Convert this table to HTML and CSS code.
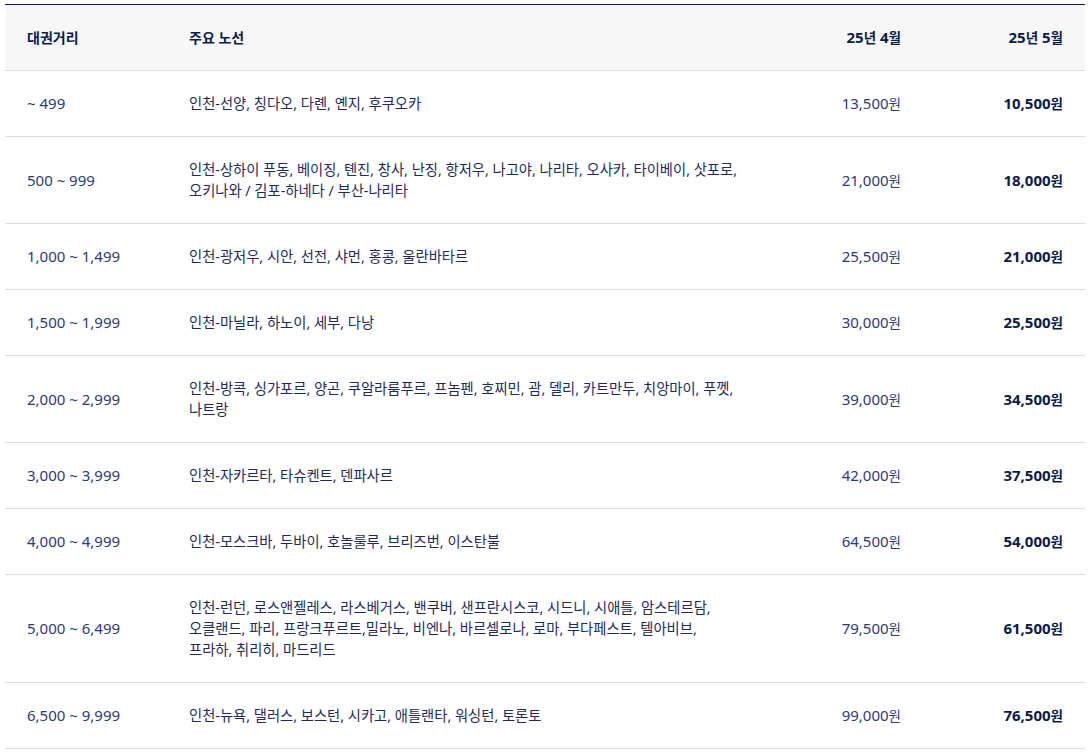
FILE: index.html
```html
<!DOCTYPE html>
<html lang="ko">
<head>
<meta charset="utf-8">
<link rel="stylesheet" href="styles.css">
</head>
<body>
<div class="wrap">
<table class="fare">
<colgroup><col class="c1"><col class="c2"><col class="c3"><col class="c4"></colgroup>
<thead>
<tr><th>대권거리</th><th>주요 노선</th><th class="r num">25<span class="u">년</span> 4<span class="u">월</span></th><th class="r num">25<span class="u">년</span> 5<span class="u">월</span></th></tr>
</thead>
<tbody>
<tr><td class="num">~ 499</td><td class="route">인천-선양, 칭다오, 다롄, 옌지, 후쿠오카</td><td class="r num">13,500<span class="u">원</span></td><td class="r num b">10,500<span class="u">원</span></td></tr>
<tr><td class="num">500 ~ 999</td><td class="route">인천-상하이 푸동, 베이징, 톈진, 창사, 난징, 항저우, 나고야, 나리타, 오사카, 타이베이, 삿포로,<br>오키나와 / 김포-하네다 / 부산-나리타</td><td class="r num">21,000<span class="u">원</span></td><td class="r num b">18,000<span class="u">원</span></td></tr>
<tr><td class="num">1,000 ~ 1,499</td><td class="route">인천-광저우, 시안, 선전, 샤먼, 홍콩, 울란바타르</td><td class="r num">25,500<span class="u">원</span></td><td class="r num b">21,000<span class="u">원</span></td></tr>
<tr><td class="num">1,500 ~ 1,999</td><td class="route">인천-마닐라, 하노이, 세부, 다낭</td><td class="r num">30,000<span class="u">원</span></td><td class="r num b">25,500<span class="u">원</span></td></tr>
<tr><td class="num">2,000 ~ 2,999</td><td class="route">인천-방콕, 싱가포르, 양곤, 쿠알라룸푸르, 프놈펜, 호찌민, 괌, 델리, 카트만두, 치앙마이, 푸껫,<br>나트랑</td><td class="r num">39,000<span class="u">원</span></td><td class="r num b">34,500<span class="u">원</span></td></tr>
<tr><td class="num">3,000 ~ 3,999</td><td class="route">인천-자카르타, 타슈켄트, 덴파사르</td><td class="r num">42,000<span class="u">원</span></td><td class="r num b">37,500<span class="u">원</span></td></tr>
<tr><td class="num">4,000 ~ 4,999</td><td class="route">인천-모스크바, 두바이, 호놀룰루, 브리즈번, 이스탄불</td><td class="r num">64,500<span class="u">원</span></td><td class="r num b">54,000<span class="u">원</span></td></tr>
<tr><td class="num">5,000 ~ 6,499</td><td class="route">인천-런던, 로스앤젤레스, 라스베거스, 밴쿠버, 샌프란시스코, 시드니, 시애틀, 암스테르담,<br>오클랜드, 파리, 프랑크푸르트,밀라노, 비엔나, 바르셀로나, 로마, 부다페스트, 텔아비브,<br>프라하, 취리히, 마드리드</td><td class="r num">79,500<span class="u">원</span></td><td class="r num b">61,500<span class="u">원</span></td></tr>
<tr><td class="num">6,500 ~ 9,999</td><td class="route">인천-뉴욕, 댈러스, 보스턴, 시카고, 애틀랜타, 워싱턴, 토론토</td><td class="r num">99,000<span class="u">원</span></td><td class="r num b">76,500<span class="u">원</span></td></tr>
</tbody>
</table>
</div>
</body>
</html>
```
FILE: styles.css
```css
html, body { margin: 0; padding: 0; background: #fff; }
.wrap { padding: 4px 3px 0 5px; }
.fare {
  width: 1080px;
  border-collapse: collapse;
  table-layout: fixed;
  border-top: 1px solid #0b1a6e;
  font-family: "Noto Sans", "Noto Sans CJK KR", sans-serif;
  font-size: 14.3px;
  line-height: 21px;
  color: #1f2a5c;
}
.c1 { width: 15%; }
.c2 { width: 55%; }
.c3 { width: 15%; }
.c4 { width: 15%; }
.fare th, .fare td {
  height: 21px;
  padding: 22px 22px;
  text-align: left;
  vertical-align: middle;
  border-bottom: 1px solid #dcdcdc;
}
.fare th {
  background: #f7f7f7;
  font-weight: 700;
  font-size: 14px;
  color: #0c1a48;
}
.fare .route { white-space: nowrap; }
.fare .num { font-size: 15px; color: #2c3a78; }
.fare th.num { font-size: 15px; color: #0c1a48; }
.fare .u { font-size: 13.5px; line-height: 1; }
.fare .r { text-align: right; }
.fare .b { font-weight: 700; color: #0c1a48; }
```
